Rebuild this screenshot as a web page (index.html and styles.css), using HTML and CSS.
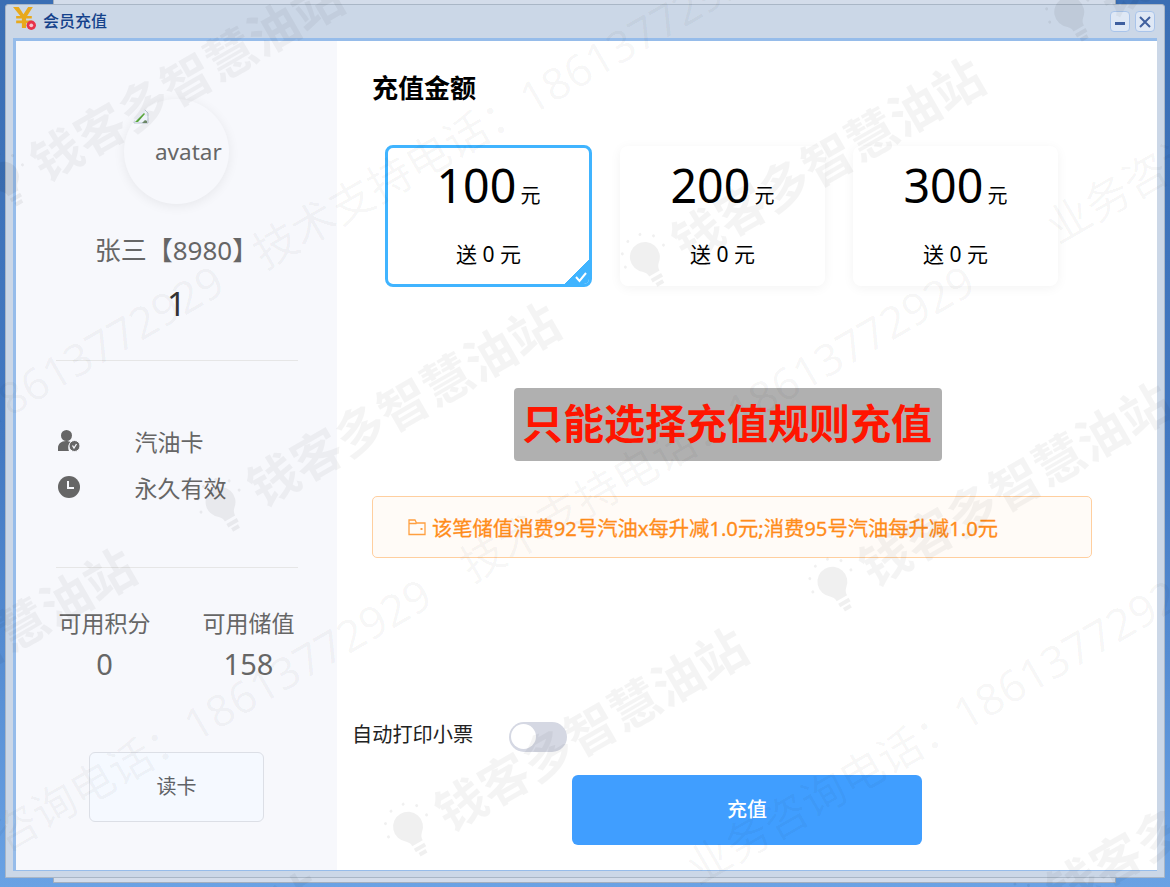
FILE: index.html
```html
<!DOCTYPE html>
<html lang="zh-CN">
<head>
    <meta charset="UTF-8">
    <meta name="viewport" content="width=device-width, initial-scale=1.0">
    <title>会员充值</title>
    <link rel="stylesheet" href="styles.css">
</head>
<body>
    <div class="back-window"></div>

    <div class="window">
        <div class="titlebar">
            <svg class="title-icon" width="25" height="25" viewBox="0 0 24 24">
                <path d="M1 1h5.500L11 8l4.500-7H20l-5.500 8.500H19v2.500h-5.500v2H19v2.500h-5.500V21h-4v-4.500H4V14h5.500v-2H4V9.500h4z" fill="#e8a91c"/>
                <circle cx="18.500" cy="18.500" r="4.500" fill="#e8324a"/>
                <circle cx="18.500" cy="18.500" r="1.800" fill="#f7c4cc"/>
            </svg>
            <span class="title-text">会员充值</span>
            <div class="win-btns">
                <div class="win-btn">
                    <svg width="12" height="12" viewBox="0 0 12 12"><rect x="1" y="6" width="10" height="3" fill="#3f5f9e"/></svg>
                </div>
                <div class="win-btn">
                    <svg width="14" height="14" viewBox="0 0 14 14"><path d="M2 2l10 10M12 2L2 12" stroke="#3f5f9e" stroke-width="2"/></svg>
                </div>
            </div>
        </div>

        <div class="content">
            <div class="side">
                <div class="avatar">
                    <svg class="broken-img" width="16" height="16" viewBox="0 0 16 16">
                        <path d="M1 1h10l4 4v10H1z" fill="#eef3fb" stroke="#b9c3d0" stroke-width="1"/>
                        <path d="M2 14l9-9 1 1-7 8z" fill="#5aa83c"/>
                        <path d="M9 15l3-3 2 1v2z" fill="#6f8a6a"/>
                    </svg>
                    <span class="avatar-alt">avatar</span>
                </div>
                <div class="member-name">张三【8980】</div>
                <div class="member-no">1</div>
                <div class="divider"></div>
                <div class="info-row first">
                    <svg width="24" height="24" viewBox="0 0 24 24">
                        <circle cx="9.500" cy="6.500" r="5.500" fill="#666"/>
                        <path d="M1 22v-3c0-4 3-7 8-7 2 0 4 .5 5 1.500-2.500 1.500-3.500 5-2 8.500z" fill="#666"/>
                        <circle cx="17.500" cy="17" r="5.500" fill="#666" stroke="#f7f8fc" stroke-width="1"/>
                        <path d="M15.500 16.500l1.500 2.500 2.500-4" fill="none" stroke="#f7f8fc" stroke-width="1.300"/>
                    </svg>
                    <span>汽油卡</span>
                </div>
                <div class="info-row">
                    <svg width="24" height="24" viewBox="0 0 24 24">
                        <circle cx="12" cy="12" r="11" fill="#666"/>
                        <path d="M11 6v7h6" fill="none" stroke="#f7f8fc" stroke-width="2"/>
                    </svg>
                    <span>永久有效</span>
                </div>
                <div class="divider second"></div>
                <div class="stats">
                    <div class="stat">
                        <div class="stat-label">可用积分</div>
                        <div class="stat-value">0</div>
                    </div>
                    <div class="stat">
                        <div class="stat-label">可用储值</div>
                        <div class="stat-value">158</div>
                    </div>
                </div>
                <div class="read-card">读卡</div>
            </div>

            <div class="main">
                <h2 class="section-title">充值金额</h2>
                <div class="amounts">
                    <div class="amount-card selected">
                        <div class="amount"><span class="amount-num">100</span> <span class="amount-unit">元</span></div>
                        <div class="amount-gift">送 0 元</div>
                        <div class="corner">
                            <svg width="14" height="12" viewBox="0 0 14 12"><path d="M2 6l3.500 4L12 2" fill="none" stroke="#fff" stroke-width="2"/></svg>
                        </div>
                    </div>
                    <div class="amount-card">
                        <div class="amount"><span class="amount-num">200</span> <span class="amount-unit">元</span></div>
                        <div class="amount-gift">送 0 元</div>
                    </div>
                    <div class="amount-card">
                        <div class="amount"><span class="amount-num">300</span> <span class="amount-unit">元</span></div>
                        <div class="amount-gift">送 0 元</div>
                    </div>
                </div>

                <div class="banner">只能选择充值规则充值</div>

                <div class="notice">
                    <svg width="18" height="18" viewBox="0 0 18 18">
                        <path d="M1 16.500V2h6l1.500 3H17v11.500zM1 5.500h7.500" fill="none" stroke="#ff9f40" stroke-width="1.300"/>
                        <rect x="12.500" y="10" width="2" height="2" fill="#ff9f40"/>
                    </svg>
                    <span>该笔储值消费92号汽油x每升减1.0元;消费95号汽油每升减1.0元</span>
                </div>

                <div class="print-row">
                    <span class="print-label">自动打印小票</span>
                    <div class="toggle"><div class="toggle-knob"></div></div>
                </div>
                <div class="submit">充值</div>
            </div>
        </div>
    </div>

    <!-- watermark sits over everything, the whole layer is turned -30deg -->
    <div class="watermark">
        <svg width="0" height="0" class="wm-defs">
            <symbol id="bulb" viewBox="0 0 60 60">
                <path d="M30 10a15 15 0 0 0-9 27c2 2 3 4 3 7h12c0-3 1-5 3-7a15 15 0 0 0-9-27zM24 47h12v4H24zM26 53h8v4h-8z"/>
                <circle cx="8" cy="24" r="1.500"/><circle cx="12" cy="11" r="1.500"/><circle cx="23" cy="3" r="1.500"/>
                <circle cx="37" cy="3" r="1.500"/><circle cx="48" cy="11" r="1.500"/><circle cx="52" cy="24" r="1.500"/>
            </symbol>
        </svg>
        <div class="wm-plane">
            <div class="wm-row brand-row top-row">
                <div class="wm-brand"><svg class="wm-bulb"><use href="#bulb"/></svg><b>钱客多智慧油站</b></div>
                <div class="wm-brand"><svg class="wm-bulb"><use href="#bulb"/></svg><b>钱客多智慧油站</b></div>
                <div class="wm-brand"><svg class="wm-bulb"><use href="#bulb"/></svg><b>钱客多智慧油站</b></div>
                <div class="wm-brand"><svg class="wm-bulb"><use href="#bulb"/></svg><b>钱客多智慧油站</b></div>
            </div>
            <div class="wm-row text-row row-a">
                <span class="wm-text">业务咨询电话：18613772929</span>
                <span class="wm-text">技术支持电话：18613772929</span>
            </div>
            <div class="wm-row brand-row">
                <div class="wm-brand"><svg class="wm-bulb"><use href="#bulb"/></svg><b>钱客多智慧油站</b></div>
                <div class="wm-brand"><svg class="wm-bulb"><use href="#bulb"/></svg><b>钱客多智慧油站</b></div>
                <div class="wm-brand"><svg class="wm-bulb"><use href="#bulb"/></svg><b>钱客多智慧油站</b></div>
                <div class="wm-brand"><svg class="wm-bulb"><use href="#bulb"/></svg><b>钱客多智慧油站</b></div>
            </div>
            <div class="wm-row text-row row-b">
                <span class="wm-text">业务咨询电话：18613772929</span>
                <span class="wm-text">技术支持电话：18613772929</span>
                <span class="wm-text far">业务咨询电话：18613772929</span>
            </div>
            <div class="wm-row brand-row">
                <div class="wm-brand"><svg class="wm-bulb"><use href="#bulb"/></svg><b>钱客多智慧油站</b></div>
                <div class="wm-brand"><svg class="wm-bulb"><use href="#bulb"/></svg><b>钱客多智慧油站</b></div>
                <div class="wm-brand"><svg class="wm-bulb"><use href="#bulb"/></svg><b>钱客多智慧油站</b></div>
                <div class="wm-brand"><svg class="wm-bulb"><use href="#bulb"/></svg><b>钱客多智慧油站</b></div>
            </div>
            <div class="wm-row text-row row-c">
                <span class="wm-text">业务咨询电话：18613772929</span>
                <span class="wm-text">业务咨询电话：18613772929</span>
            </div>
            <div class="wm-row brand-row">
                <div class="wm-brand"><svg class="wm-bulb"><use href="#bulb"/></svg><b>钱客多智慧油站</b></div>
                <div class="wm-brand"><svg class="wm-bulb"><use href="#bulb"/></svg><b>钱客多智慧油站</b></div>
                <div class="wm-brand"><svg class="wm-bulb"><use href="#bulb"/></svg><b>钱客多智慧油站</b></div>
                <div class="wm-brand"><svg class="wm-bulb"><use href="#bulb"/></svg><b>钱客多智慧油站</b></div>
            </div>
        </div>
    </div>
</body>
</html>
```

FILE: styles.css
```css
* {
    box-sizing: border-box;
}
html, body {
    margin: 0;
    padding: 0;
}
body {
    position: relative;
    width: 1170px;
    height: 887px;
    overflow: hidden;
    font-family: "Noto Sans", "Noto Sans CJK SC", sans-serif;
    background: linear-gradient(180deg, #3a6eb4 0%, #4379c2 50%, #6aa2e4 100%);
}

/* desktop windows */
.back-window {
    position: absolute;
    left: 53px;
    top: -10px;
    width: 1063px;
    height: 893px;
    background: #d3dcea;
    border: 1px solid #a4afbd;
}
.window {
    position: absolute;
    left: 5px;
    top: 4px;
    width: 1160px;
    height: 874px;
    background: #cbd7e7;
    border: 1px solid #a9b6c6;
    border-radius: 3px 3px 0 0;
    display: flex;
    flex-direction: column;
    padding: 0 7px 6px 7px;
}
.titlebar {
    height: 33px;
    flex: none;
    display: flex;
    align-items: center;
    margin: 0 -7px;
    padding: 0 9px 0 6px;
}
.title-icon {
    margin-top: -7px;
}
.title-text {
    margin-left: 6px;
    padding-bottom: 4px;
    font-size: 16px;
    font-weight: 500;
    color: #15428b;
}
.win-btns {
    margin-left: auto;
    display: flex;
    gap: 5px;
}
.win-btn {
    width: 20px;
    height: 21px;
    border: 1px solid #a9c4ea;
    border-radius: 4px;
    background: #dfe8f5;
    display: flex;
    align-items: center;
    justify-content: center;
}
.content {
    flex: 1;
    display: flex;
    min-height: 0;
    border: 3px solid #96bcea;
    border-width: 3px 0 1px 3px;
    background: #fff;
}

/* left column */
.side {
    width: 321px;
    flex: none;
    background: #f7f8fc;
    display: flex;
    flex-direction: column;
    align-items: center;
}
.avatar {
    width: 105px;
    height: 105px;
    margin-top: 58px;
    border-radius: 50%;
    overflow: hidden;
    background: #f7f8fc;
    box-shadow: 0 2px 12px rgba(0, 0, 0, 0.07);
    display: flex;
    padding: 9px 0 0 9px;
    flex: none;
}
.broken-img {
    flex: none;
}
.avatar-alt {
    margin: 28px 0 0 6px;
    font-size: 22.500px;
    line-height: 32px;
    color: #666;
}
.member-name {
    margin-top: 28px;
    font-size: 26px;
    line-height: 36px;
    color: #666;
}
.member-no {
    margin-top: 16px;
    font-size: 33px;
    line-height: 40px;
    color: #333;
}
.divider {
    width: 242px;
    height: 1px;
    margin-top: 36px;
    background: #e6e6e6;
    flex: none;
}
.info-row {
    width: 242px;
    height: 46px;
    display: flex;
    align-items: center;
    font-size: 23px;
    color: #666;
    margin-left: 6px;
}
.info-row.first {
    margin-top: 57px;
}
.info-row svg {
    margin-left: -2px;
    margin-right: 54px;
    flex: none;
}
.divider.second {
    margin-top: 57px;
}
.stats {
    width: 236px;
    margin-top: 37px;
    display: flex;
    justify-content: space-between;
}
.stat-label {
    font-size: 23px;
    line-height: 36px;
    color: #666;
}
.stat-value {
    margin-top: 1px;
    font-size: 29px;
    line-height: 44px;
    color: #666;
    text-align: center;
}
.read-card {
    width: 175px;
    height: 70px;
    margin-top: 66px;
    padding-bottom: 4px;
    border: 1px solid #dcdfe6;
    border-radius: 6px;
    background: #f5f9ff;
    font-size: 20px;
    color: #606266;
    display: flex;
    align-items: center;
    justify-content: center;
    flex: none;
}

/* right column */
.main {
    flex: 1;
    display: flex;
    flex-direction: column;
    padding-left: 35px;
}
.section-title {
    margin: 28px 0 0;
    font-size: 26px;
    line-height: 38px;
    font-weight: 700;
    color: #000;
}
.amounts {
    display: flex;
    gap: 28px;
    margin: 38px 0 0 13px;
    align-items: center;
}
.amount-card {
    position: relative;
    width: 205px;
    height: 140px;
    background: #fff;
    border-radius: 8px;
    box-shadow: 0 2px 12px rgba(0, 0, 0, 0.05);
    color: #000;
    text-align: center;
    overflow: hidden;
}
.amount-card.selected {
    width: 207px;
    height: 142px;
    border: 3px solid #40b4ff;
    box-shadow: none;
}
.amount {
    margin-top: 7px;
    line-height: 64px;
}
.selected .amount {
    margin-top: 5px;
}
.amount-num {
    font-size: 46.500px;
}
.amount-unit {
    font-size: 20px;
}
.amount-gift {
    margin-top: 10px;
    font-size: 21px;
    line-height: 30px;
}
.corner {
    position: absolute;
    right: 0;
    bottom: 0;
    width: 24px;
    height: 24px;
    background: linear-gradient(135deg, transparent 50%, #40b4ff 50%);
}
.corner svg {
    position: absolute;
    right: 1px;
    bottom: 1px;
}
.banner {
    align-self: flex-start;
    margin: 101px 0 0 142px;
    width: 428px;
    height: 73px;
    padding: 0 2px 8px 0;
    background: #b0b0b0;
    border-radius: 4px;
    color: #ff1500;
    font-size: 41px;
    font-weight: 700;
    display: flex;
    align-items: center;
    justify-content: center;
}
.notice {
    width: 720px;
    height: 62px;
    margin-top: 35px;
    border: 1px solid #ffcf9f;
    border-radius: 5px;
    background: #fffbf7;
    color: #ff8c1a;
    font-size: 20.300px;
    -webkit-text-stroke: 0.3px #ff8c1a;
    display: flex;
    align-items: center;
    padding-left: 35px;
    gap: 6px;
}
.print-row {
    display: flex;
    align-items: center;
    margin: 164px 0 0 -20px;
}
.print-label {
    margin-top: -8px;
    font-size: 20.200px;
    color: #222;
}
.toggle {
    width: 58px;
    height: 30px;
    margin-left: 36px;
    border-radius: 15px;
    background: #d5d8e3;
    padding: 2px;
}
.toggle-knob {
    width: 25px;
    height: 25px;
    border-radius: 50%;
    background: #fff;
}
.submit {
    width: 350px;
    height: 70px;
    margin: 23px 0 0 200px;
    padding-bottom: 4px;
    background: #409eff;
    border-radius: 6px;
    color: #fff;
    font-size: 20px;
    font-weight: 500;
    display: flex;
    align-items: center;
    justify-content: center;
}

/* watermark layer */
.watermark {
    position: absolute;
    inset: 0;
    overflow: hidden;
    pointer-events: none;
}
.wm-defs {
    position: absolute;
}
.wm-plane {
    position: absolute;
    left: 0;
    top: 0;
    width: 2600px;
    padding-top: 66px;
    transform-origin: 0 0;
    transform: rotate(-30deg);
}
.wm-row {
    height: 187.500px;
    display: flex;
    align-items: center;
    white-space: nowrap;
}
.brand-row {
    margin-left: -580px;
    padding-top: 30px;
    color: rgba(0, 0, 0, 0.045);
}
.brand-row.top-row {
    margin-left: -605px;
    padding-top: 0;
}
.wm-brand {
    width: 490px;
    flex: none;
    display: flex;
    align-items: center;
    font-size: 50px;
}
.wm-brand b {
    font-weight: 700;
    margin-left: 2px;
}
.wm-bulb {
    width: 60px;
    height: 60px;
    fill: rgba(0, 0, 0, 0.06);
    flex: none;
}
.text-row {
    font-size: 44px;
    color: rgba(0, 0, 0, 0.04);
}
.wm-text {
    width: 627px;
    flex: none;
}
.row-a {
    margin-left: -533px;
}
.row-b {
    margin-left: -510px;
}
.row-c {
    margin-left: 162px;
}
.far {
    margin-left: 50px;
}
```
